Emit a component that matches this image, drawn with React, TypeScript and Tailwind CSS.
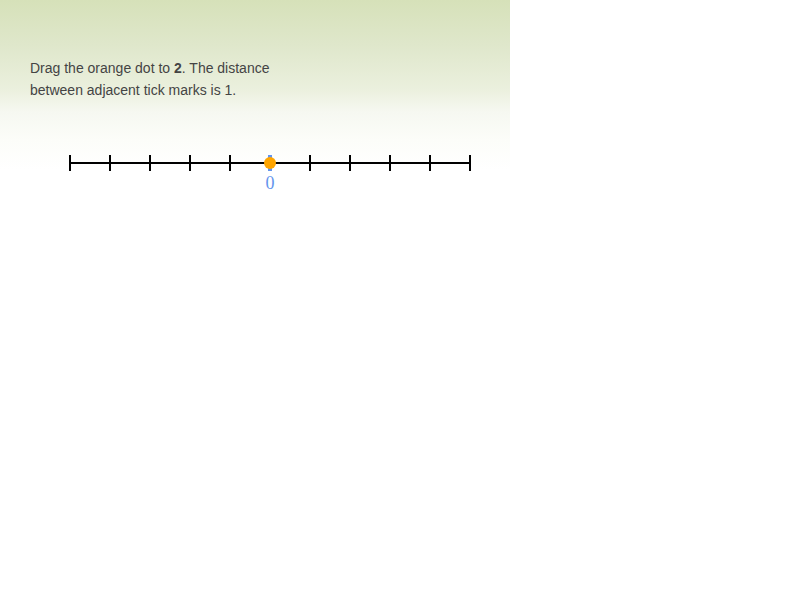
import { useRef, useState } from "react";
import type { PointerEvent } from "react";

const TICKS = [-5, -4, -3, -2, -1, 0, 1, 2, 3, 4, 5];
const SPACING = 40;
const CENTER = 240;

function NumberLine() {
  const [value, setValue] = useState(0);
  const svg = useRef<SVGSVGElement>(null);

  const drag = (event: PointerEvent<SVGSVGElement>) => {
    if (event.buttons !== 1 || !svg.current) return;
    const box = svg.current.getBoundingClientRect();
    const next = Math.round((event.clientX - box.left - CENTER) / SPACING);
    setValue(Math.max(-5, Math.min(5, next)));
  };

  return (
    <svg
      ref={svg}
      width="480"
      height="100"
      viewBox="0 0 480 100"
      role="img"
      aria-label="Number line"
      onPointerDown={drag}
      onPointerMove={drag}
    >
      <g strokeWidth="2">
        {TICKS.map((tick) => (
          <line
            key={tick}
            x1={CENTER + tick * SPACING}
            x2={CENTER + tick * SPACING}
            y1="34"
            y2="50"
            stroke="#000"
          />
        ))}
        <line x1="40" x2="440" y1="42" y2="42" stroke="#000" />
        <line x1="240" x2="240" y1="34" y2="50" stroke="#6495ed" strokeWidth="4" />
      </g>
      <text
        x="240"
        y="68"
        textAnchor="middle"
        fill="#6495ed"
        className="font-['Liberation_Serif',serif] text-[18px]"
      >
        0
      </text>
      <circle cx={CENTER + value * SPACING} cy="42" r="6" fill="#ffa500" className="cursor-pointer" />
    </svg>
  );
}

export default function App() {
  return (
    <main className="min-h-screen bg-white font-['Liberation_Sans',Arial,sans-serif] text-sm text-[#444]">
      <section className="max-w-[510px] bg-[linear-gradient(#d6e1b9_0px,#dfe7cb_45px,#ebf0de_90px,#f6f8f1_112px,#fcfdf9_140px,#fff_170px)] px-[30px] pt-[57px]">
        <p className="max-w-[260px] leading-[22px]">
          Drag the orange dot to <strong>2</strong>. The distance between adjacent tick marks is 1.
        </p>
        <div className="mt-5">
          <NumberLine />
        </div>
      </section>
    </main>
  );
}
